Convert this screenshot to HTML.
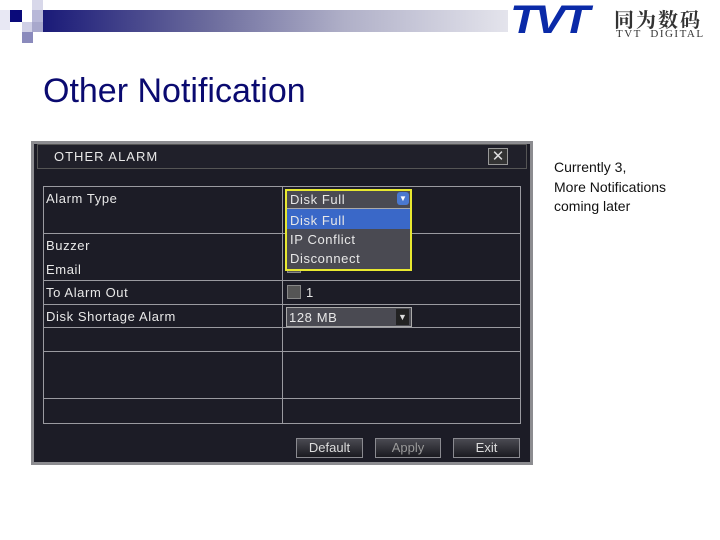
<!DOCTYPE html>
<html><head><meta charset="utf-8"><style>
*{margin:0;padding:0;box-sizing:border-box}
body{width:720px;height:540px;background:#fff;position:relative;overflow:hidden;font-family:"Liberation Sans",sans-serif}
.a{position:absolute}
.t{color:#e8e8e8;font-size:13px;letter-spacing:0.6px;position:absolute}
.hl{position:absolute;height:1px;background:#9a9aa0;left:43px;width:478px}
.btn{position:absolute;top:438px;height:20px;background:linear-gradient(#4a4a52,#1a1a20);border:1px solid #8a8a90;color:#ddd;font-size:13px;text-align:center;line-height:18px}
</style></head><body>
<div class="a" style="left:10px;top:10px;width:12px;height:12px;background:#0a0a7a"></div>
<div class="a" style="left:32px;top:0;width:11px;height:10px;background:#d8d8ea"></div>
<div class="a" style="left:32px;top:10px;width:11px;height:12px;background:#b8b8d8"></div>
<div class="a" style="left:0;top:10px;width:10px;height:20px;background:#e8e8f4"></div>
<div class="a" style="left:22px;top:22px;width:10px;height:10px;background:#d0d0e6"></div>
<div class="a" style="left:22px;top:32px;width:11px;height:11px;background:#8a8abc"></div>
<div class="a" style="left:32px;top:22px;width:11px;height:10px;background:#a8a8cc"></div>
<div class="a" style="left:43px;top:10px;width:465px;height:22px;background:linear-gradient(90deg,#1a1a78,#6a6a9c 35%,#b0b0c8 65%,#e4e4ec)"></div>
<div class="a" style="left:510px;top:-2px;font:italic bold 40px 'Liberation Sans',sans-serif;color:#0a2aa8;letter-spacing:-3px;transform:scaleX(1.15);transform-origin:left">TVT</div>
<div class="a" style="left:614px;top:4px;font:bold 20px 'Noto Serif CJK SC',serif;color:#333;letter-spacing:2px">同为数码</div>
<div class="a" style="left:616px;top:28px;font:11px 'Liberation Serif',serif;color:#333;letter-spacing:1.5px">TVT&nbsp;&nbsp;DIGITAL</div>
<div class="a" style="left:43px;top:72px;font-size:34px;color:#0a0a70">Other Notification</div>
<div class="a" style="left:554px;top:158px;font-size:14px;color:#111;line-height:19.5px">Currently 3,<br>More Notifications<br>coming later</div>

<div class="a" style="left:31px;top:141px;width:502px;height:324px;background:#1c1c26;border:3px solid #8c8c90"></div>
<div class="a" style="left:37px;top:144px;width:490px;height:25px;background:#20202a;border:1px solid #555"></div>
<div class="t" style="left:54px;top:149px;font-size:13px;letter-spacing:1px">OTHER ALARM</div>
<div class="a" style="left:488px;top:148px;width:20px;height:17px;border:1px solid #999;background:#333;color:#ddd;font-size:15px;text-align:center;line-height:15px">✕</div>
<div class="a" style="left:43px;top:186px;width:478px;height:238px;border:1px solid #9a9aa0"></div>
<div class="a" style="left:282px;top:186px;width:1px;height:238px;background:#9a9aa0"></div>
<div class="hl" style="top:233px"></div><div class="hl" style="top:280px"></div><div class="hl" style="top:304px"></div><div class="hl" style="top:327px"></div><div class="hl" style="top:351px"></div><div class="hl" style="top:398px"></div>
<div class="t" style="left:46px;top:191px">Alarm Type</div>
<div class="t" style="left:46px;top:238px">Buzzer</div>
<div class="t" style="left:46px;top:262px">Email</div>
<div class="t" style="left:46px;top:285px">To Alarm Out</div>
<div class="t" style="left:46px;top:309px">Disk Shortage Alarm</div>
<div class="a" style="left:287px;top:262px;width:14px;height:11px;background:#555;border:1px solid #888"></div>
<div class="a" style="left:287px;top:285px;width:14px;height:14px;background:#555;border:1px solid #888"></div>
<div class="t" style="left:306px;top:285px">1</div>
<div class="a" style="left:286px;top:307px;width:126px;height:20px;background:#4a4a52;border:1px solid #aaa"></div>
<div class="t" style="left:289px;top:310px">128 MB</div>
<div class="a" style="left:396px;top:309px;width:13px;height:16px;background:#222;color:#ddd;font-size:9px;text-align:center;line-height:16px">▼</div>
<div class="a" style="left:285px;top:189px;width:127px;height:82px;background:#4a4a52;border:2px solid #e8e830"></div>
<div class="t" style="left:290px;top:192px">Disk Full</div>
<div class="a" style="left:397px;top:192px;width:12px;height:13px;background:#4a78d0;border-radius:3px;color:#fff;font-size:8px;text-align:center;line-height:13px">▼</div>
<div class="a" style="left:287px;top:208px;width:123px;height:1px;background:#aaa"></div>
<div class="a" style="left:287px;top:209px;width:123px;height:20px;background:#3a68c8"></div>
<div class="t" style="left:290px;top:213px">Disk Full</div>
<div class="t" style="left:290px;top:232px">IP Conflict</div>
<div class="t" style="left:290px;top:251px">Disconnect</div>
<div class="btn" style="left:296px;width:67px">Default</div>
<div class="btn" style="left:375px;width:66px;color:#999">Apply</div>
<div class="btn" style="left:453px;width:67px">Exit</div>
</body></html>
